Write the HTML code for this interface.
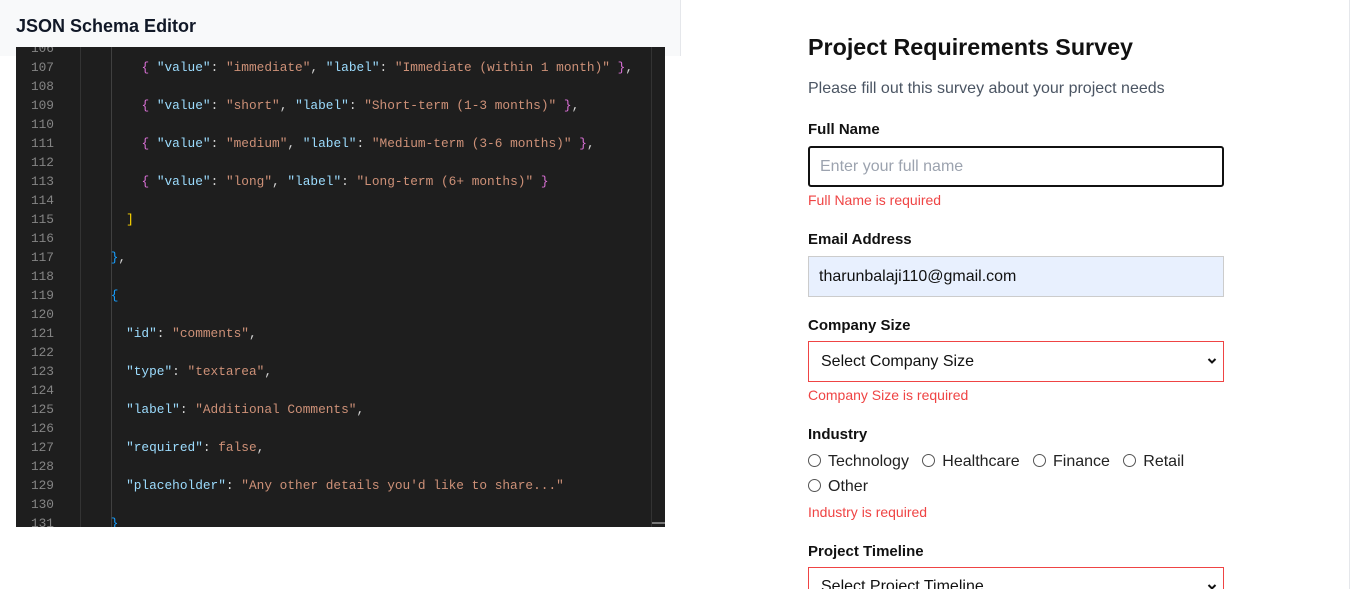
<!DOCTYPE html>
<html><head><meta charset="utf-8"><style>
*{margin:0;padding:0;box-sizing:border-box}
html,body{width:1351px;height:589px;overflow:hidden}
body{background:#fff;font-family:"Liberation Sans",sans-serif;position:relative}
.hdr{position:absolute;left:0;top:0;width:681px;height:56px;background:#f8f9fa;border-right:1px solid #e5e7eb}
.hdr h1{position:absolute;left:16px;top:16px;font-size:18px;font-weight:bold;color:#111827}
.ed{position:absolute;left:16px;top:47px;width:649px;height:480px;background:#1e1e1e;overflow:hidden;font-family:"Liberation Mono",monospace;font-size:12.8px}
.ln{position:absolute;left:0;width:38px;text-align:right;color:#858585}
.gut{position:absolute;left:64px;top:0;width:1px;height:480px;background:#333}
.guide{position:absolute;width:1px;background:#404040}
.c{position:absolute;white-space:pre;color:#d4d4d4}
.k{color:#9cdcfe}.s{color:#ce9178}.p{color:#da70d6}.y{color:#ffd700}.b{color:#179fff}
.rb{position:absolute;left:1349px;top:0;width:1px;height:589px;background:#e5e7eb}
.f{position:absolute;left:808px;color:#111}
.lbl{font-size:15px;font-weight:bold}
.err{font-size:14px;color:#ef4444}
.inp{position:absolute;left:808px;width:416px;height:41px;font-size:16px;padding:0 10px;line-height:39px;overflow:hidden}
.car{position:absolute;right:6px;top:15px}
.radio{display:inline-block;width:13px;height:13px;border:1px solid #555;border-radius:50%;vertical-align:-1px;margin-right:7px}
</style></head><body>
<div class="hdr"><h1>JSON Schema Editor</h1></div>
<div class="ed">
<div class="gut"></div>
<div class="guide" style="left:95px;top:0;height:480px"></div>
<div style="position:absolute;left:635px;top:0;width:1px;height:480px;background:#333"></div>
<div style="position:absolute;left:636px;top:475px;width:13px;height:2px;background:#777"></div>
<div id="code"></div>
</div>
<script>
var L=[
[106,''],[107,'        <span class="p">{</span> <span class="k">"value"</span>: <span class="s">"immediate"</span>, <span class="k">"label"</span>: <span class="s">"Immediate (within 1 month)"</span> <span class="p">}</span>,'],
[108,''],[109,'        <span class="p">{</span> <span class="k">"value"</span>: <span class="s">"short"</span>, <span class="k">"label"</span>: <span class="s">"Short-term (1-3 months)"</span> <span class="p">}</span>,'],
[110,''],[111,'        <span class="p">{</span> <span class="k">"value"</span>: <span class="s">"medium"</span>, <span class="k">"label"</span>: <span class="s">"Medium-term (3-6 months)"</span> <span class="p">}</span>,'],
[112,''],[113,'        <span class="p">{</span> <span class="k">"value"</span>: <span class="s">"long"</span>, <span class="k">"label"</span>: <span class="s">"Long-term (6+ months)"</span> <span class="p">}</span>'],
[114,''],[115,'      <span class="y">]</span>'],[116,''],[117,'    <span class="b">}</span>,'],[118,''],[119,'    <span class="b">{</span>'],
[120,''],[121,'      <span class="k">"id"</span>: <span class="s">"comments"</span>,'],[122,''],[123,'      <span class="k">"type"</span>: <span class="s">"textarea"</span>,'],
[124,''],[125,'      <span class="k">"label"</span>: <span class="s">"Additional Comments"</span>,'],[126,''],[127,'      <span class="k">"required"</span>: <span class="s">false</span>,'],
[128,''],[129,'      <span class="k">"placeholder"</span>: <span class="s">"Any other details you\'d like to share..."</span>'],[130,''],[131,'    <span class="b">}</span>']];
var h='';L.forEach(function(r,i){var t=i*19-6;h+='<div class="ln" style="top:'+t+'px">'+r[0]+'</div><div class="c" style="left:64px;top:'+t+'px">'+r[1]+'</div>';});
document.getElementById('code').innerHTML=h;
</script>
<div class="rb"></div>
<div class="f" style="top:34px;font-size:23.3px;font-weight:bold">Project Requirements Survey</div>
<div class="f" style="top:80px;font-size:16px;color:#4b5563">Please fill out this survey about your project needs</div>
<div class="f lbl" style="top:121px">Full Name</div>
<div class="inp" style="top:146px;border:2px solid #111;border-radius:3px;color:#9ca3af;line-height:37px">Enter your full name</div>
<div class="f err" style="top:192px">Full Name is required</div>
<div class="f lbl" style="top:231px">Email Address</div>
<div class="inp" style="top:256px;border:1px solid #ccc;background:#e8f0fe;color:#111">tharunbalaji110@gmail.com</div>
<div class="f lbl" style="top:317px">Company Size</div>
<div class="inp" style="top:341px;border:1px solid #ef4444;color:#111;padding-left:12px">Select Company Size<svg class="car" width="10" height="8" viewBox="0 0 10 8"><path d="M1.5 2 L5 5.5 L8.5 2" fill="none" stroke="#111" stroke-width="2"/></svg></div>
<div class="f err" style="top:387px">Company Size is required</div>
<div class="f lbl" style="top:426px">Industry</div>
<div class="f" style="top:453px;font-size:16px;color:#222"><span class="radio"></span>Technology&nbsp;&nbsp;&nbsp;<span class="radio"></span>Healthcare&nbsp;&nbsp;&nbsp;<span class="radio"></span>Finance&nbsp;&nbsp;&nbsp;<span class="radio"></span>Retail</div>
<div class="f" style="top:478px;font-size:16px;color:#222"><span class="radio"></span>Other</div>
<div class="f err" style="top:504px">Industry is required</div>
<div class="f lbl" style="top:543px">Project Timeline</div>
<div class="inp" style="top:567px;border:1px solid #ef4444;color:#111;padding-left:12px;line-height:38px">Select Project Timeline<svg class="car" width="10" height="8" viewBox="0 0 10 8"><path d="M1.5 2 L5 5.5 L8.5 2" fill="none" stroke="#111" stroke-width="2"/></svg></div>
</body></html>
